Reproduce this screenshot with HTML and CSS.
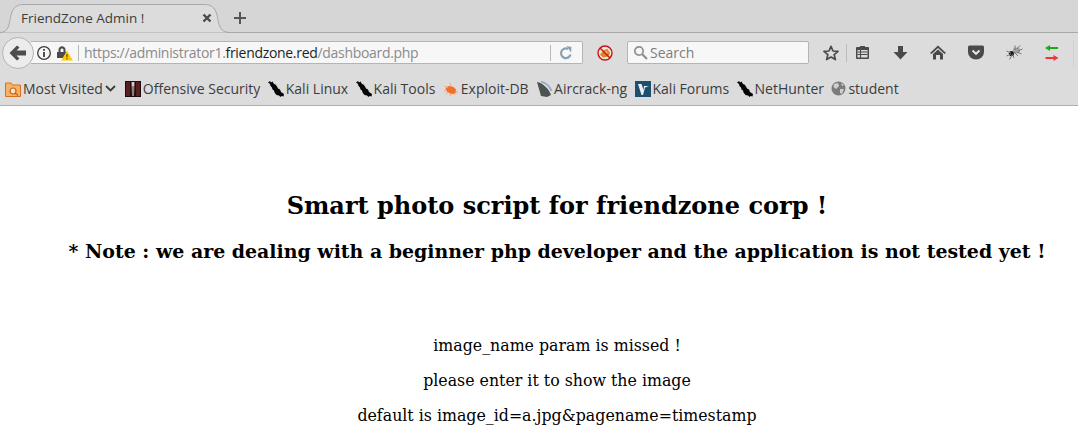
FILE: index.html
```html
<!DOCTYPE html>
<html lang="en">
<head>
    <meta charset="UTF-8">
    <title>FriendZone Admin !</title>
    <link rel="stylesheet" href="styles.css">
</head>
<body>
    <svg class="defs" width="0" height="0">
        <symbol id="kali" viewBox="0 0 16 16">
            <path d="M0 1.5 L2 0 L3 1.5 L4.5 0.5 L6 3 L7.5 3.5 L9 5.5 L10 7.5 L12 8.5 L13 11 L16 13 L15.5 15.5 L13.5 15 L12.5 16 L11 14.5 L8.5 14 L6.5 11.5 L6 9.5 L4.5 8.5 L4 6.5 L2.5 5 L2 3 Z" fill="#050505"/>
        </symbol>
    </svg>
    <header class="chrome">
        <div class="tabstrip">
            <div class="tab">
                <svg class="tab-shape" width="230" height="33" viewBox="0 0 230 33"><path d="M0 32.5 C9 32.5 9 24 11 15 C13 7 17 4.5 24 4.5 L204 4.5 C211 4.5 215 7 217 15 C219 24 219 32.5 230 32.5" fill="#dcdcdc" stroke="#a8a8a8"/></svg>
                <span class="tab-title">FriendZone Admin !</span>
                <svg class="tab-close" width="10" height="10" viewBox="0 0 10 10"><path d="M1.5 1.5 L8.5 8.5 M8.5 1.5 L1.5 8.5" stroke="#4a4a4a" stroke-width="2.4"/></svg>
            </div>
            <svg class="newtab" width="14" height="14" viewBox="0 0 14 14"><path d="M7 1 V13 M1 7 H13" stroke="#555" stroke-width="2"/></svg>
        </div>
        <div class="navbar">
            <button class="back">
                <svg width="18" height="16" viewBox="0 0 18 16"><path d="M8 0.5 L10.5 2.5 L7.5 5.5 H17 V10.5 H7.5 L10.5 13.5 L8 15.5 L0.5 8 Z" fill="#4d4d4d"/></svg>
            </button>
            <div class="urlbar">
                <svg class="info" width="16" height="16" viewBox="0 0 16 16"><circle cx="8" cy="8" r="6.3" fill="none" stroke="#3c3c3c" stroke-width="1.3"/><rect x="7.1" y="7" width="1.8" height="5" fill="#3c3c3c"/><rect x="7.1" y="4" width="1.8" height="1.8" fill="#3c3c3c"/></svg>
                <svg class="lock" width="16" height="16" viewBox="0 0 16 16"><path d="M1.5 7 V5 C1.5 0 8.5 0 8.5 5 V7 H10 V13 H0 V7 Z M3.5 7 H6.5 V5 C6.5 3 3.5 3 3.5 5 Z" fill="#4a4a4a" fill-rule="evenodd"/><path d="M10 5.5 L15.8 15.5 H4.2 Z" fill="#ffcb00"/><rect x="9.4" y="9" width="1.2" height="3.4" fill="#5b4a00"/><rect x="9.4" y="13.2" width="1.2" height="1.2" fill="#5b4a00"/></svg>
                <span class="url-sep"></span>
                <span class="url">https://administrator1.<b>friendzone.red</b>/dashboard.php</span>
                <span class="url-sep right"></span>
                <svg class="reload" width="14" height="14" viewBox="0 0 14 14"><path d="M11.5 8.5 A4.8 4.8 0 1 1 9 3" fill="none" stroke="#8aa0b4" stroke-width="2.2"/><path d="M7.5 0 L12.5 1 L12 6.5 Z" fill="#8aa0b4"/></svg>
            </div>
            <svg class="noscript" width="16" height="16" viewBox="0 0 16 16"><circle cx="8" cy="8" r="7" fill="#efe6d6"/><path d="M3 9.5 L7 5 L10.5 4 L13 8 L11.5 11.5 L6 12.5 Z" fill="#d9862a"/><circle cx="9" cy="7.5" r="1.4" fill="#f2b860"/><circle cx="8" cy="8" r="7" fill="none" stroke="#c8141e" stroke-width="1.4"/><path d="M3 3 L13 13" stroke="#c8141e" stroke-width="1.4"/></svg>
            <div class="searchbar">
                <svg width="15" height="15" viewBox="0 0 15 15"><circle cx="6" cy="6" r="4.2" fill="none" stroke="#8f8f8f" stroke-width="1.7"/><path d="M9.2 9.2 L14 14" stroke="#8f8f8f" stroke-width="2.2"/></svg>
                <span>Search</span>
            </div>
            <svg class="tool star" width="16" height="16" viewBox="0 0 16 16"><path d="M8 1.3 L10 6 L15 6.4 L11.2 9.7 L12.4 14.6 L8 12 L3.6 14.6 L4.8 9.7 L1 6.4 L6 6 Z" fill="none" stroke="#4a4a4a" stroke-width="1.7" stroke-linejoin="round"/></svg>
            <span class="tool-sep"></span>
            <svg class="tool clip" width="15" height="15" viewBox="0 0 15 15"><path d="M5 1 H10 V2 H13 Q14 2 14 3 V13 Q14 14 13 14 H2 Q1 14 1 13 V3 Q1 2 2 2 H5 Z" fill="#4a4a4a"/><path d="M2.5 5 H12.5 V12.5 H2.5 Z" fill="#dcdcdc"/><path d="M2.5 7 H12.5 M2.5 9.5 H12.5 M5.5 5 V13" stroke="#4a4a4a" stroke-width="1.1"/></svg>
            <svg class="tool down" width="15" height="15" viewBox="0 0 15 15"><path d="M5 1 H10 V7 H14.5 L7.5 14.5 L0.5 7 H5 Z" fill="#4a4a4a"/></svg>
            <svg class="tool home" width="16" height="15" viewBox="0 0 16 15"><path d="M8 0.5 L16 8 L14.5 9 L8 3 L1.5 9 L0 8 Z M8 4.5 L13 9 V14.5 H10 V10 H6 V14.5 H3 V9 Z" fill="#4a4a4a"/></svg>
            <svg class="tool pocket" width="16" height="15" viewBox="0 0 16 15"><path d="M1.5 0.5 H14.5 Q16 0.5 16 2 V7 A8 7.5 0 0 1 0 7 V2 Q0 0.5 1.5 0.5 Z" fill="#4a4a4a"/><path d="M4.5 5.5 L8 8.8 L11.5 5.5" fill="none" stroke="#e4e4e4" stroke-width="2"/></svg>
            <svg class="tool spider" width="17" height="15" viewBox="0 0 17 15"><circle cx="5.5" cy="8.5" r="2.6" fill="#1c1c1c"/><ellipse cx="10.5" cy="5.5" rx="3.6" ry="3" fill="#a2a2a2"/><path d="M0.5 6 L5 8 M0.5 11 L5 9 M3.5 14.5 L6 10 M8 13 L6.5 9 M9 0.5 L9 5 M14 0.5 L11 4 M16.5 4 L12 6 M15.5 9 L11 7 M12 11 L8 7" stroke="#777" stroke-width="1"/></svg>
            <svg class="tool arrows" width="14" height="16" viewBox="0 0 14 16"><path d="M0 3 L5 0 V2 H13 V4 H5 V6 Z" fill="#12b012"/><path d="M13.5 13 L8.5 10 V12 H0.5 V14 H8.5 V16 Z" fill="#f0353a"/></svg>
            <span class="tool-end"></span>
        </div>
        <nav class="bookmarks">
            <a class="bm first">
                <svg width="16" height="16" viewBox="0 0 16 16"><path d="M0.5 2 H6 L7.5 4 H15.5 V15.5 H0.5 Z" fill="#f7b26a" stroke="#d9701c"/><circle cx="8" cy="10" r="3" fill="#fbe3c4" stroke="#c8641a" stroke-width="1.2"/><path d="M10 12 L13 14.5" stroke="#c8641a" stroke-width="1.4"/></svg>
                <span>Most Visited</span>
                <svg class="chev" width="11" height="7" viewBox="0 0 11 7"><path d="M1 1 L5.5 5.5 L10 1" fill="none" stroke="#3c3c3c" stroke-width="1.8"/></svg>
            </a>
            <a class="bm">
                <svg width="16" height="16" viewBox="0 0 16 16"><rect width="16" height="16" fill="#1e0c0c"/><rect x="1" y="1" width="4" height="14" fill="#5a2020"/><rect x="11" y="1" width="4" height="14" fill="#5a2020"/><path d="M6.5 1 H9.5 L9 15 H8.4 V5 H7.6 V15 H7 Z" fill="#d8c8c8"/></svg>
                <span>Offensive Security</span>
            </a>
            <a class="bm"><svg width="16" height="16"><use href="#kali"/></svg><span>Kali Linux</span></a>
            <a class="bm"><svg width="16" height="16"><use href="#kali"/></svg><span>Kali Tools</span></a>
            <a class="bm">
                <svg width="16" height="16" viewBox="0 0 16 16"><ellipse cx="8" cy="9" rx="5.5" ry="3.6" fill="#f0702a" transform="rotate(20 8 9)"/><path d="M1 5 L5 7 M1 10 L4 9.5 M3 13 L6 11 M7 15 L8 12 M12 14 L11 12 M15 12 L12 10 M7 2 L8 6" stroke="#f6a677" stroke-width="1"/></svg>
                <span>Exploit-DB</span>
            </a>
            <a class="bm">
                <svg width="16" height="16" viewBox="0 0 16 16"><path d="M1 1 C7 2 13 8 15 14 L11 16 L5 15 Z" fill="#4d5350"/><path d="M5 0.5 C10 2 14 6 15.5 10" fill="none" stroke="#8aaed0" stroke-width="1.8"/></svg>
                <span>Aircrack-ng</span>
            </a>
            <a class="bm">
                <svg width="16" height="16" viewBox="0 0 16 16"><rect width="16" height="16" fill="#1d4f6e"/><path d="M3 3 H6.5 L8.5 9 L9 5 H14 L10 6.5 L8 14 H6.5 Z" fill="#e8f0f4"/></svg>
                <span>Kali Forums</span>
            </a>
            <a class="bm"><svg width="16" height="16"><use href="#kali"/></svg><span>NetHunter</span></a>
            <a class="bm">
                <svg width="15" height="15" viewBox="0 0 15 15"><circle cx="7.5" cy="7.5" r="7" fill="#7c7c7c"/><path d="M3 3 L7 2 L8 5 L5 8 L2.5 6 Z M9 8 L13 8 L11 13 L9 12 Z M10 2 L13 4 L11 5 Z" fill="#cfcfcf"/></svg>
                <span>student</span>
            </a>
        </nav>
    </header>
    <main class="content">
        <h1>Smart photo script for friendzone corp !</h1>
        <h2>* Note : we are dealing with a beginner php developer and the application is not tested yet !</h2>
        <div class="messages">
            <p>image_name param is missed !</p>
            <p>please enter it to show the image</p>
            <p>default is image_id=a.jpg&amp;pagename=timestamp</p>
        </div>
    </main>
</body>
</html>
```

FILE: styles.css
```css
html, body { margin: 0; height: 100%; overflow: hidden; background: #fff; }
.defs { display: block; height: 0; }
svg { flex: none; display: block; }

.chrome { background: #dcdcdc; font-family: "Open Sans", "Noto Sans", sans-serif; color: #3c3c3c; border-bottom: 1px solid #b0b0b0; }

.tabstrip { height: 33px; display: flex; align-items: center; background: #d6d6d6; box-shadow: inset 0 -1px 0 #a8a8a8; }
.tab { position: relative; width: 227px; height: 33px; display: flex; align-items: center; box-sizing: border-box; padding: 3px 0 0 21px; }
.tab-shape { position: absolute; left: 0; top: 0; }
.tab-title { position: relative; font-size: 13.5px; color: #3c3c3c; flex: 1; }
.tab-close { position: relative; margin-right: 15px; }
.newtab { margin: 3px 0 0 6px; }

.navbar { height: 40px; display: flex; align-items: center; padding-bottom: 1px; box-sizing: border-box; }
.back { flex: none; width: 32px; height: 32px; margin-left: 2px; padding: 0; border: 1px solid #b4b4b4; border-radius: 50%; background: #ececec; display: flex; align-items: center; justify-content: center; position: relative; z-index: 1; }
.urlbar { flex: none; width: 552px; height: 23px; box-sizing: border-box; margin-left: -3px; display: flex; align-items: center; background: #f7f7f7; border: 1px solid #b4b4b4; border-left: 0; border-radius: 0 2px 2px 0; }
.info { margin-left: 5px; }
.lock { margin-left: 5px; }
.url-sep { width: 1px; height: 16px; background: #b8b8b8; margin-left: 5px; }
.url-sep.right { margin-left: 0; }
.url { font-size: 14px; letter-spacing: -0.31px; color: #8a8a8a; margin-left: 5px; flex: 1; white-space: nowrap; }
.url b { font-weight: 400; color: #1e1e1e; }
.reload { margin: 0 9px 0 8px; }
.noscript { margin-left: 14px; }
.searchbar { flex: none; width: 182px; height: 23px; margin-left: 14px; display: flex; align-items: center; gap: 2px; padding-left: 5px; box-sizing: border-box; background: #f7f7f7; border: 1px solid #b4b4b4; border-radius: 2px; font-size: 14px; color: #7d7d7d; }
.tool { margin-left: 22px; }
.star { margin-left: 14px; }
.tool-sep { flex: none; width: 1px; height: 18px; background: #bcbcbc; margin-left: 7px; }
.clip { margin-left: 8px; }
.down { margin-left: 23px; }
.tool-end { flex: none; width: 1px; height: 26px; background: #d0d0d0; margin-left: 14px; }

.bookmarks { height: 32px; display: flex; align-items: center; padding: 0 0 1px 5px; box-sizing: border-box; font-size: 14px; }
.bm { display: flex; align-items: center; gap: 2px; margin-right: 7.4px; white-space: nowrap; }
.chev { margin-left: 0; }
.first { margin-right: 9px; }

.content { padding-left: 36px; text-align: center; font-family: "DejaVu Serif", serif; color: #000; }
h1 { margin: 84px 0 0; font-size: 24px; line-height: 31px; }
h2 { margin: 18px 0 0; font-size: 18.96px; line-height: 24px; }
.messages { margin-top: 73px; font-size: 15.8px; line-height: 19px; }
.messages p { margin: 0 0 16px; }
```
